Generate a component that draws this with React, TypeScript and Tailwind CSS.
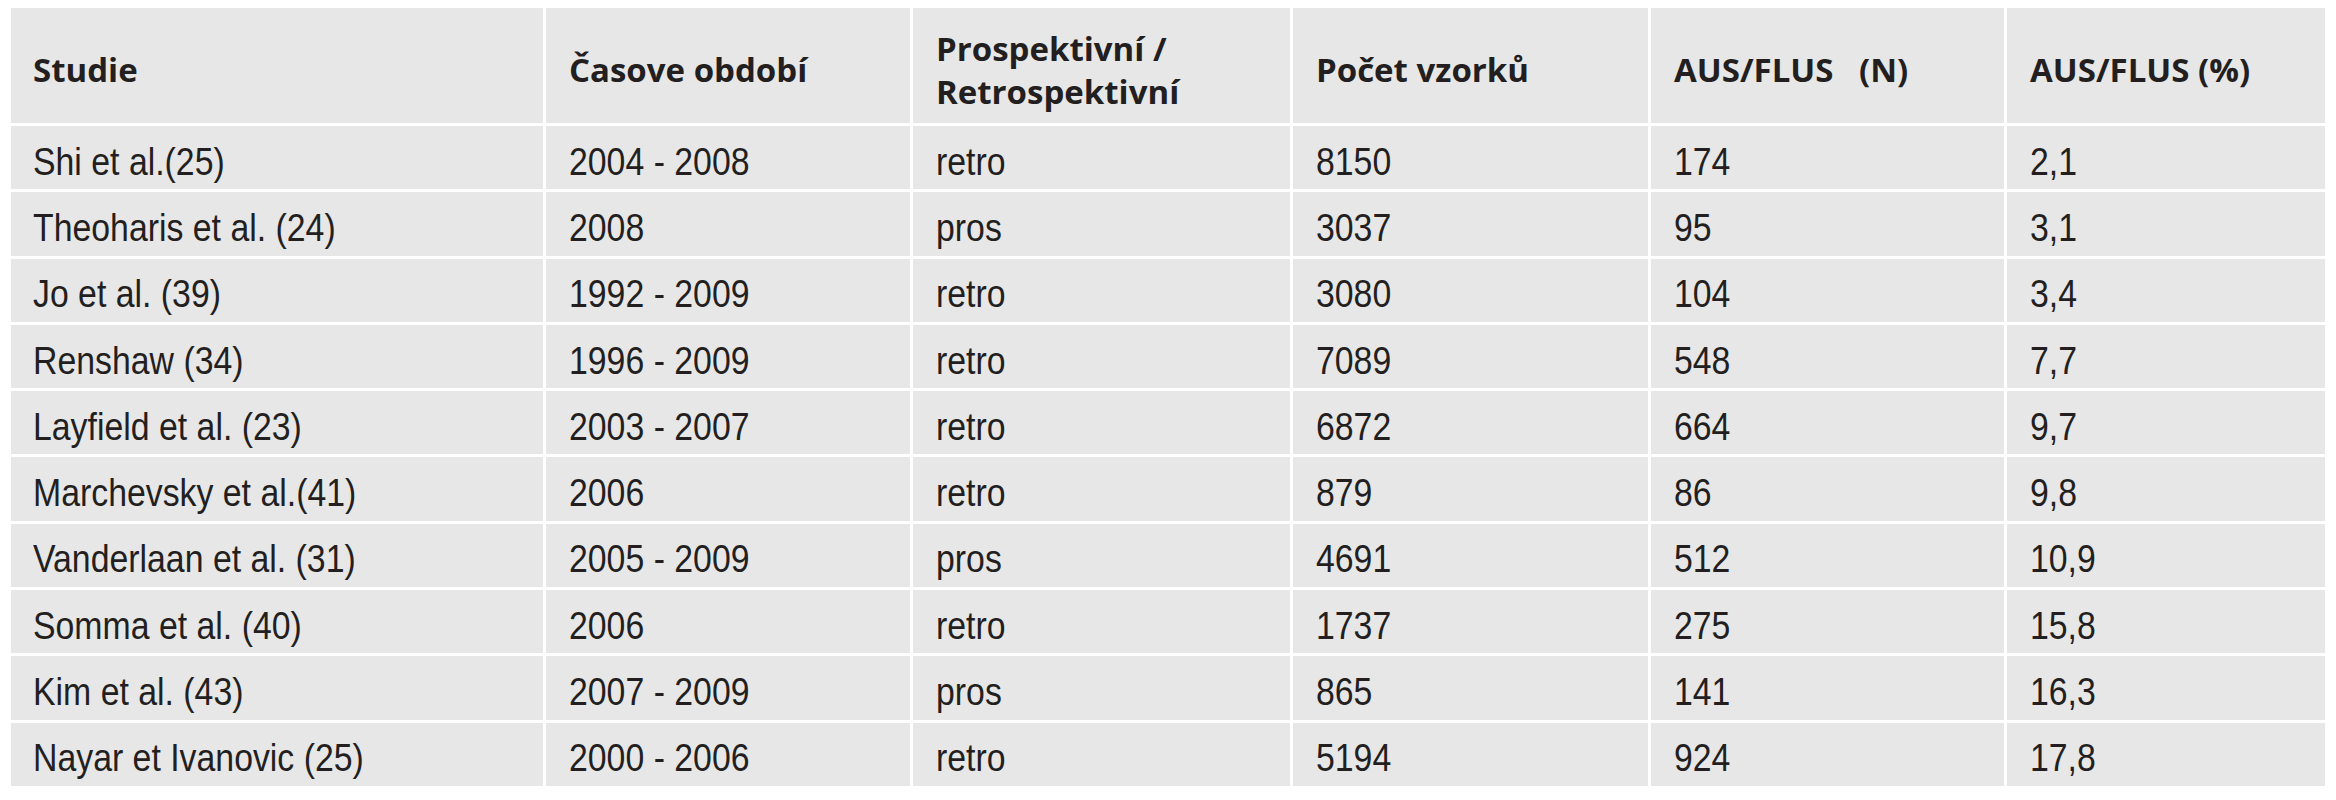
const headers = [
  "Studie",
  "Časove období",
  "Prospektivní /\nRetrospektivní",
  "Počet vzorků",
  "AUS/FLUS\u00a0\u00a0\u00a0(N)",
  "AUS/FLUS (%)",
];

const rows: string[][] = [
  ["Shi et al.(25)", "2004 - 2008", "retro", "8150", "174", "2,1"],
  ["Theoharis et al. (24)", "2008", "pros", "3037", "95", "3,1"],
  ["Jo et al. (39)", "1992 - 2009", "retro", "3080", "104", "3,4"],
  ["Renshaw (34)", "1996 - 2009", "retro", "7089", "548", "7,7"],
  ["Layfield et al. (23)", "2003 - 2007", "retro", "6872", "664", "9,7"],
  ["Marchevsky et al.(41)", "2006", "retro", "879", "86", "9,8"],
  ["Vanderlaan et al. (31)", "2005 - 2009", "pros", "4691", "512", "10,9"],
  ["Somma et al. (40)", "2006", "retro", "1737", "275", "15,8"],
  ["Kim et al. (43)", "2007 - 2009", "pros", "865", "141", "16,3"],
  ["Nayar et Ivanovic (25)", "2000 - 2006", "retro", "5194", "924", "17,8"],
];

const gridTemplateColumns = "532px 364px 377px 355px 353px 318px";

export default function App() {
  return (
    <div className="min-h-screen bg-white pl-[11px] pt-[8px] text-[#231f20]">
      <div
        className="grid w-[2314px] gap-[3px] bg-white"
        style={{ gridTemplateColumns }}
      >
        {headers.map((header, i) => (
          <div
            key={header}
            className={
              "flex h-[115px] items-center whitespace-pre-line bg-[#e7e7e7] pt-2 font-['Open_Sans',sans-serif] text-[33px] font-bold leading-[43px] " +
              (i === 0 ? "pl-[22px]" : "pl-[23px]")
            }
          >
            {header}
          </div>
        ))}
        {rows.map((row) =>
          row.map((cell, i) => (
            <div
              key={`${row[0]}-${i}`}
              className={
                "flex h-[63.3px] items-center overflow-hidden bg-[#e7e7e7] pt-2 font-['Liberation_Sans',Arial,sans-serif] text-[38px] leading-none " +
                (i === 0 ? "pl-[22px]" : "pl-[23px]")
              }
            >
              <span className="inline-block origin-left scale-x-[0.89] whitespace-nowrap">
                {cell}
              </span>
            </div>
          ))
        )}
      </div>
    </div>
  );
}
